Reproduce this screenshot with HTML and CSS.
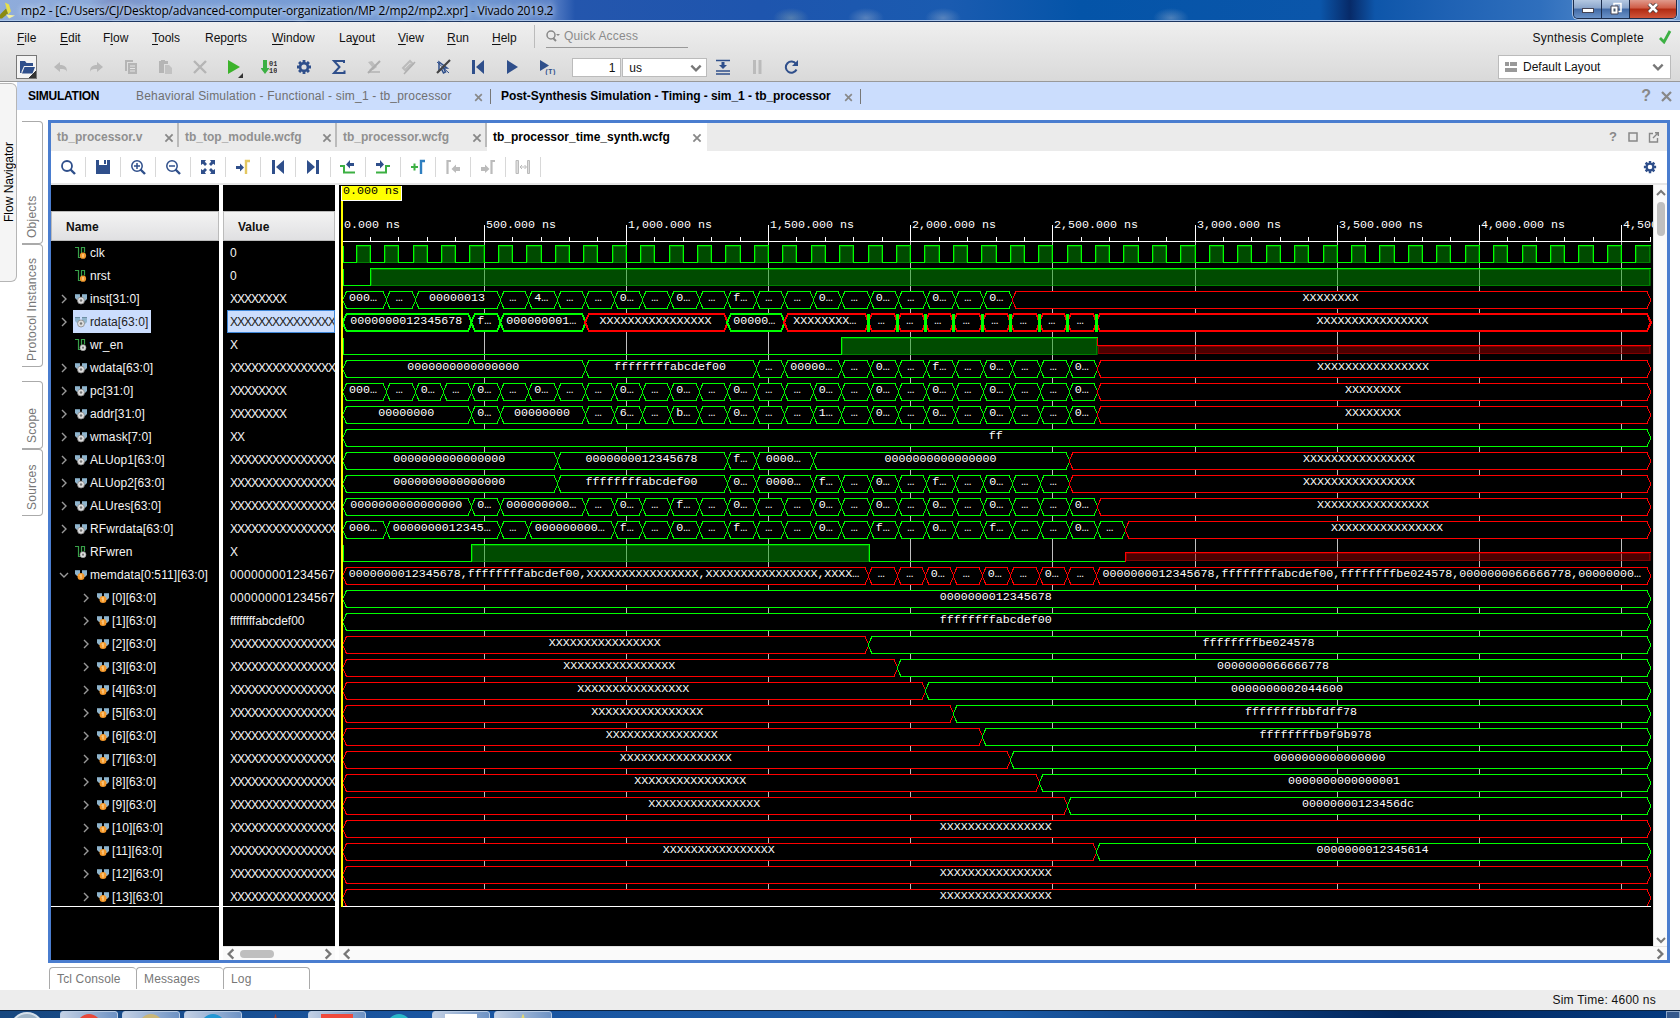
FILE: index.html
```html
<!DOCTYPE html>
<html lang="en">
<head>
<meta charset="utf-8">
<title>mp2 - Vivado 2019.2</title>
<link rel="stylesheet" href="styles.css">
</head>
<body>
<svg width="0" height="0" class="defs">
  <symbol id="gear" viewBox="0 0 16 16"><path d="M6.6 1h2.8v2l1 .4 1.5-1.3 2 2L12.600 5.600l.4 1h2v2.800h-2l-.4 1 1.300 1.500-2 2-1.500-1.300-1 .4v2H6.600v-2l-1-.4-1.500 1.300-2-2 1.300-1.500-.4-1H1V6.600h2l.4-1L2.100 4.100l2-2 1.500 1.300 1-.4zM8 5.400A2.600 2.600 0 1 0 8 10.600 2.600 2.600 0 1 0 8 5.400z" fill="#2f4f8b" fill-rule="evenodd"/></symbol>
  <symbol id="x" viewBox="0 0 10 10"><path d="M2 2l6 6M8 2l-6 6" stroke="#888" stroke-width="1.500"/></symbol>
  <symbol id="down" viewBox="0 0 12 12"><path d="M2 4l4 4 4-4" fill="none" stroke="#777" stroke-width="2"/></symbol>
  <symbol id="up" viewBox="0 0 12 12"><path d="M2 8l4-4 4 4" fill="none" stroke="#777" stroke-width="2"/></symbol>
  <symbol id="left" viewBox="0 0 12 12"><path d="M8 2L4 6l4 4" fill="none" stroke="#777" stroke-width="2"/></symbol>
  <symbol id="right" viewBox="0 0 12 12"><path d="M4 2l4 4-4 4" fill="none" stroke="#777" stroke-width="2"/></symbol>
  <symbol id="start" viewBox="0 0 16 16"><path d="M2 1h3v14H2zM14 1v14L6 8z" fill="#2f4f8b"/></symbol>
  <symbol id="bus" viewBox="0 0 12 12"><path d="M0 1h5v6H2L0 5zM7 1h5v5l-2 2H7z" fill="#8fb4cc"/><path d="M0 1h5v1H0zM7 1h5v1H7z" fill="#6d8ea3"/><circle cx="6" cy="7.500" r="3.500" fill="#ddd" stroke="#888" stroke-width=".8"/><circle cx="6" cy="7.500" r="1.200" fill="#777"/></symbol>
  <symbol id="mem" viewBox="0 0 12 12"><path d="M0 1h5v6H2L0 5zM7 1h5v5l-2 2H7z" fill="#8fb4cc"/><path d="M0 1h5v1H0zM7 1h5v1H7z" fill="#6d8ea3"/><circle cx="6" cy="7.500" r="3.500" fill="#f5982a"/><path d="M6 5.500v4M5 6.500l1-1" stroke="#ffe6b5" fill="none"/></symbol>
  <symbol id="clkbit" viewBox="0 0 12 12"><path d="M0 .5h3.500v10H6.500V.5H9.500v5" fill="none" stroke="#38a048" stroke-width="1.200"/><circle cx="8" cy="8.700" r="3.100" fill="#f5982a"/><path d="M8 7v3.400" stroke="#ffe6b5"/></symbol>
  <symbol id="netbit" viewBox="0 0 12 12"><path d="M0 .5h3.500v10H6.500V.5H9.500v5" fill="none" stroke="#38a048" stroke-width="1.200"/><circle cx="8" cy="8.700" r="3" fill="#ddd" stroke="#999" stroke-width=".6"/><circle cx="8" cy="8.700" r="1.100" fill="#777"/></symbol>
</svg>

<header class="titlebar">
  <svg class="logo" viewBox="0 0 16 16"><path d="M5 0l4 2 2 7-3 3z" fill="#e6e04a"/><path d="M0 12l6-6 2 5-6 5H0z" fill="#8a8a10"/><path d="M6 12l9 1-6 3z" fill="#f3f0a0"/></svg>
  <span class="title">mp2 - [C:/Users/CJ/Desktop/advanced-computer-organization/MP 2/mp2/mp2.xpr] - Vivado 2019.2</span>
  <i class="ghosts"></i>
  <div class="winbtns">
    <span class="wb min"><i></i></span>
    <span class="wb max"><svg width="12" height="13" viewBox="0 0 12 13"><path d="M4 1.500h7v8H4z" fill="none" stroke="#fff" stroke-width="1.500"/><path d="M1 4h7v8H1z" fill="#fff" stroke="#445"/><path d="M3.500 6.500h2v3h-2z" fill="#456" /></svg></span>
    <span class="wb close"><svg width="12" height="10" viewBox="0 0 12 10"><path d="M2 1l8 8M10 1L2 9" stroke="#433" stroke-width="4.200"/><path d="M2 1l8 8M10 1L2 9" stroke="#fff" stroke-width="2.600"/></svg></span>
  </div>
</header>

<section class="topbar">
  <div class="menurow">
    <nav class="menus">
      <span style="width:43px"><u>F</u>ile</span><span style="width:43px"><u>E</u>dit</span><span style="width:49px">F<u>l</u>ow</span><span style="width:53px"><u>T</u>ools</span><span style="width:67px">Rep<u>o</u>rts</span><span style="width:67px"><u>W</u>indow</span><span style="width:59px">La<u>y</u>out</span><span style="width:49px"><u>V</u>iew</span><span style="width:45px"><u>R</u>un</span><span style="width:42px"><u>H</u>elp</span>
    </nav>
    <div class="quick"><svg width="16" height="14" viewBox="0 0 16 14"><circle cx="6" cy="6" r="4" fill="none" stroke="#888" stroke-width="1.500"/><path d="M8 9l3 3" stroke="#888" stroke-width="2"/><path d="M11 5h4l-2 2z" fill="#888"/></svg>Quick Access</div>
    <span class="synth">Synthesis Complete</span>
    <svg class="check" width="14" height="14" viewBox="0 0 14 14"><path d="M2 8l4 4 6-11" fill="none" stroke="#3cb043" stroke-width="2.800"/></svg>
  </div>
  <div class="tools">
    <span class="t open"><svg width="16" height="16" viewBox="0 0 16 16"><path d="M1 2h5l1.500 2H14v3H5L2.500 12.500V14H1z" fill="#2f4f8b"/><path d="M5.500 8H16l-2.500 6.500H3z" fill="#2f4f8b"/></svg></span>
    <span class="t"><svg width="16" height="16" viewBox="0 0 16 16"><path d="M1 8l6-5v3c5 0 7 2 7 7-1-3-3-3-7-3v3z" fill="#b9b9b9"/></svg></span>
    <span class="t"><svg width="16" height="16" viewBox="0 0 16 16"><path d="M15 8L9 3v3c-5 0-7 2-7 7 1-3 3-3 7-3v3z" fill="#b9b9b9"/></svg></span>
    <span class="t"><svg width="16" height="16" viewBox="0 0 16 16"><path d="M2 1h8v2H4v9H2zM5 4h9v11H5z" fill="#b5b5b5"/><path d="M7 7h5M7 9.500h5M7 12h5" stroke="#e4e4e4"/></svg></span>
    <span class="t"><svg width="16" height="16" viewBox="0 0 16 16"><path d="M2 2h2V1h4v1h3v3H7v9H2z" fill="#b5b5b5"/><path d="M8 6h4l3 3v6H8z" fill="#c2c2c2"/></svg></span>
    <span class="t"><svg width="16" height="16" viewBox="0 0 16 16"><path d="M2 2l12 12M14 2L2 14" stroke="#b5b5b5" stroke-width="2.400"/></svg></span>
    <span class="t"><svg width="18" height="22" viewBox="0 0 18 22"><path d="M2 4l12 7-12 7z" fill="#3cb32b"/><path d="M17 17v5h-5z" fill="#333"/></svg></span>
    <span class="t"><svg width="16" height="16" viewBox="0 0 16 16"><path d="M2 1h4v8h2.500L4 15 -.5 9H2z" fill="#3cb043"/><text x="8" y="7" class="bits">01</text><text x="8" y="13.500" class="bits">10</text></svg></span>
    <span class="t"><svg width="16" height="16"><use href="#gear"/></svg></span>
    <span class="t"><svg width="16" height="16" viewBox="0 0 16 16"><path d="M13 4V2H3l5.500 6L3 14h10.500v-2.500" fill="none" stroke="#2f4f8b" stroke-width="2"/></svg></span>
    <span class="t"><svg width="16" height="16" viewBox="0 0 16 16"><path d="M2 3l4-1 5 6-4 3H3l3-3zM3 12h11v2H3z" fill="#bdbdbd"/><path d="M14 2L2 14" stroke="#adadad" stroke-width="2"/></svg></span>
    <span class="t"><svg width="16" height="16" viewBox="0 0 16 16"><path d="M3 9l7-7 3 3-7 7zM5 11l6-6" fill="none" stroke="#bbb" stroke-width="2"/><path d="M15 3L4 15" stroke="#b0b0b0" stroke-width="1.500"/></svg></span>
    <span class="t"><svg width="16" height="16" viewBox="0 0 16 16"><path d="M4 3v9l2.500-2 2 4 2-1-2-4H12z" fill="none" stroke="#2f4f8b" stroke-width="1.500"/><path d="M2 3l12 11" stroke="#2f4f8b" stroke-width="1"/><path d="M15 1L2 14" stroke="#444" stroke-width="2.200"/></svg></span>
    <span class="t"><svg width="16" height="16"><use href="#start"/></svg></span>
    <span class="t"><svg width="16" height="16" viewBox="0 0 16 16"><path d="M3 1l11 7-11 7z" fill="#2f4f8b"/></svg></span>
    <span class="t"><svg width="18" height="16" viewBox="0 0 18 16"><path d="M2 1l9 5.500L2 12z" fill="#2f4f8b"/><text x="6.500" y="14.500" class="tt">(T)</text></svg></span>
    <span class="num">1</span>
    <span class="unit">us<svg width="14" height="14"><use href="#down"/></svg></span>
    <span class="t step"><svg width="16" height="16" viewBox="0 0 16 16"><path d="M1 1.500h14M1 12h14M1 15h14" stroke="#2f4f8b" stroke-width="1.500"/><path d="M6.500 3h3v3H12l-4 4-4-4h2.500z" fill="#2f4f8b"/></svg></span>
    <span class="t"><svg width="16" height="16" viewBox="0 0 16 16"><path d="M4 1h3v14H4zM9.500 1h3v14h-3z" fill="#bbb"/></svg></span>
    <span class="t"><svg width="16" height="16" viewBox="0 0 16 16"><path d="M13 5a5.600 5.600 0 1 0 .5 5.500" fill="none" stroke="#2f4f8b" stroke-width="2"/><path d="M15 1v6H9z" fill="#2f4f8b"/></svg></span>
    <div class="layout"><svg width="12" height="12" viewBox="0 0 12 12"><path d="M0 1h4v4H0zM5 1h7v4H5zM0 7h12v4H0z" fill="#999"/></svg>Default Layout<svg class="push" width="14" height="14"><use href="#down"/></svg></div>
  </div>
</section>

<main class="work">
  <aside class="flow"><span>Flow Navigator</span></aside>
  <div class="content">
    <div class="simbar">
      <b class="s0">SIMULATION</b>
      <span class="s1">Behavioral Simulation - Functional - sim_1 - tb_processor</span>
      <svg class="cx" width="12" height="12"><use href="#x"/></svg>
      <b class="s2">Post-Synthesis Simulation - Timing - sim_1 - tb_processor</b>
      <svg class="cx" width="12" height="12"><use href="#x"/></svg>
      <span class="q push">?</span><svg width="15" height="15"><use href="#x"/></svg>
    </div>
    <div class="lower">
      <aside class="sidetabs">
        <div style="height:123px">Objects</div><div style="height:123px">Protocol Instances</div>
        <div class="gap" style="height:68px">Scope</div><div style="height:67px">Sources</div>
      </aside>
      <div class="center">
        <section class="panel">
          <div class="tabs">
            <span class="tab" style="width:128px">tb_processor.v<svg width="12" height="12"><use href="#x"/></svg></span>
            <span class="tab" style="width:158px">tb_top_module.wcfg<svg width="12" height="12"><use href="#x"/></svg></span>
            <span class="tab" style="width:150px">tb_processor.wcfg<svg width="12" height="12"><use href="#x"/></svg></span>
            <span class="tab active" style="width:220px">tb_processor_time_synth.wcfg<svg width="12" height="12"><use href="#x"/></svg></span>
            <span class="pq push">?</span>
            <svg class="pi" width="10" height="10" viewBox="0 0 10 10"><path d="M1 1h8v8H1z" fill="none" stroke="#888" stroke-width="1.500"/></svg>
            <svg class="pi" width="11" height="11" viewBox="0 0 11 11"><path d="M5 1.500H1.500V10H9.500V6M5 6l5-5M7 .8h3.300V4" fill="none" stroke="#888" stroke-width="1.400"/></svg>
          </div>
          <div class="wtools">
            <span><svg viewBox="0 0 16 16"><circle cx="7" cy="7" r="5" fill="none" stroke="#2f4f8b" stroke-width="1.800"/><path d="M10.500 10.500L15 15" stroke="#2f4f8b" stroke-width="2.400"/></svg></span>
            <span><svg viewBox="0 0 16 16"><path d="M1 1h3v5h8V1h3v14H1zM9 1h2v4H9z" fill="#2f4f8b"/></svg></span>
            <span><svg viewBox="0 0 16 16"><circle cx="7" cy="7" r="5.200" fill="none" stroke="#2f4f8b" stroke-width="1.500"/><path d="M10.500 10.500L15 15" stroke="#2f4f8b" stroke-width="2.400"/><path d="M4 7h6M7 4v6" stroke="#2f4f8b" stroke-width="1.500"/></svg></span>
            <span><svg viewBox="0 0 16 16"><circle cx="7" cy="7" r="5.200" fill="none" stroke="#2f4f8b" stroke-width="1.500"/><path d="M10.500 10.500L15 15" stroke="#2f4f8b" stroke-width="2.400"/><path d="M4 7h6" stroke="#2f4f8b" stroke-width="1.500"/></svg></span>
            <span><svg viewBox="0 0 16 16"><path d="M1 1h5L4.800 2.800 7 5 5 7 2.800 4.800 1 6zM15 1v5l-1.800-1.200L11 7 9 5l2.200-2.200L10 1zM1 15v-5l1.800 1.200L5 9l2 2-2.200 2.200L6 15zM15 15h-5l1.200-1.800L9 11l2-2 2.200 2.200L15 10z" fill="#2f4f8b"/></svg></span>
            <span><svg viewBox="0 0 16 16"><path d="M1 7h4V4.500L9 8.500l-4 4V10H1z" fill="#2f4f8b"/><path d="M15 2h-4v13" fill="none" stroke="#e3c760" stroke-width="2.400"/></svg></span>
            <span><svg><use href="#start"/></svg></span>
            <span><svg viewBox="0 0 16 16"><path d="M11 1h3v14h-3zM2 1l8 7-8 7z" fill="#2f4f8b"/></svg></span>
            <span><svg viewBox="0 0 16 16"><path d="M0 7h4v6.500h11" fill="none" stroke="#3cb043" stroke-width="2"/><path d="M14 4H10V1L6 5.500l4 4V7h4z" fill="#2f4f8b"/></svg></span>
            <span><svg viewBox="0 0 16 16"><path d="M15 7h-4v6.500H1" fill="none" stroke="#3cb043" stroke-width="2"/><path d="M1 4h4V1l4 4.500-4 4V7H1z" fill="#2f4f8b"/></svg></span>
            <span><svg viewBox="0 0 16 16"><path d="M1 8h7M4.500 4.500v7" stroke="#3cb043" stroke-width="2"/><path d="M15 2h-4v13" fill="none" stroke="#2f7fc0" stroke-width="2.400"/></svg></span>
            <span><svg viewBox="0 0 16 16"><path d="M6 2H2.500v13" fill="none" stroke="#bbb" stroke-width="2.200"/><path d="M15 8h-4V5.500L6.500 10l4.500 4V12h4z" fill="#bbb"/></svg></span>
            <span><svg viewBox="0 0 16 16"><path d="M15 2h-3.500v13" fill="none" stroke="#bbb" stroke-width="2.200"/><path d="M1 8h4V5.500L9.500 10 5 14V12H1z" fill="#bbb"/></svg></span>
            <span><svg viewBox="0 0 16 16"><path d="M1 1.500h2.500v13H1zM12.500 1.500h2v13h-2z" fill="#ddd" stroke="#bbb"/><path d="M5 8h6M7 6L5 8l2 2M9.500 6l2 2-2 2" fill="none" stroke="#bbb"/></svg></span>
            <svg class="push wg" width="14" height="14"><use href="#gear"/></svg>
          </div>
          <div class="viewer">
            <div class="names">
              <div class="blank"></div>
              <div class="head">Name</div>
              <div class="rows" id="names"></div>
            </div>
            <div class="values">
              <div class="blank"></div>
              <div class="head">Value</div>
              <div class="rows" id="values"></div>
              <div class="hs"><svg width="14" height="14"><use href="#left"/></svg><i></i><svg class="push" width="14" height="14"><use href="#right"/></svg></div>
            </div>
            <div class="wavecol">
              <div class="waverow">
                <svg id="wave" width="1314" height="761" viewBox="339 185 1314 761"></svg>
                <div class="vs"><svg width="12" height="12"><use href="#up"/></svg><i></i><svg class="bot" width="12" height="12"><use href="#down"/></svg></div>
              </div>
              <div class="hs wide"><svg width="14" height="14"><use href="#left"/></svg><svg class="push" width="14" height="14"><use href="#right"/></svg></div>
            </div>
          </div>
        </section>
        <div class="btabs"><span>Tcl Console</span><span>Messages</span><span>Log</span></div>
      </div>
    </div>
  </div>
</main>
<footer class="status">Sim Time: 4600 ns</footer>
<div class="taskbar">
  <i class="orb"></i>
  <span class="tk" style="background-color:#9db4d3"><b style="background:#e8493a"></b></span>
  <span class="tk"><b style="background:#c9b677"></b></span>
  <span class="tk"><b style="background:#2196d3"></b></span>
  <span class="tk off"><b style="background:#a04038;width:3px"></b></span>
  <span class="tk"><b class="sq" style="background:#ef4a3c"></b></span>
  <span class="tk off"><b style="background:#2bb8c8"></b></span>
  <span class="tk"><b class="sq" style="background:#fff"></b></span>
  <span class="tk"><b style="background:#e0d870;width:4px"></b></span>
  <i class="desk"></i>
</div>
<script src="wave.js"></script>
</body>
</html>
```
FILE: styles.css
```css
* { box-sizing: border-box; }
body { margin: 0; width: 1680px; height: 1018px; overflow: hidden; background: #fff; font: 12px/14px "Liberation Sans", Arial, sans-serif; color: #111; display: flex; flex-direction: column; }
svg { display: block; flex: none; }
.defs { position: absolute; }
.push { margin-left: auto; }

.titlebar { height: 22px; flex: none; display: flex; align-items: flex-start; border-bottom: 1px solid #1d3560; box-shadow: inset 0 -1px #a9c4e8; background: linear-gradient(90deg, #8facdb 0, #8ba9d9 90px, #7d93c8 110px, #7c9fd6 180px, #7198d2 480px, #5d83c8 550px, #2456ad 575px, #1e55ae 760px, #1a5bb0 950px, #0454a8 1080px, #0b56aa 1320px, #072a68 1350px, #0e56aa 1375px, #1f62b4 1450px, #2f6fbd 1540px, #6f9ed6 1680px); }
.logo { width: 16px; height: 17px; margin-top: 2px; }
.title { margin: 3px 0 0 5px; width: 534px; white-space: nowrap; font: 12px/16px "Open Sans", "Noto Sans", sans-serif; color: #000; text-shadow: 0 0 6px #d5e2f5, 0 0 6px #d5e2f5; letter-spacing: -.175px; }
.ghosts { width: 660px; height: 20px; margin-left: 216px; background: radial-gradient(ellipse 18px 10px at 20px 18px, #8fa9b077, transparent), radial-gradient(ellipse 18px 10px at 95px 18px, #9bb0cc77, transparent), radial-gradient(ellipse 18px 10px at 172px 18px, #9bb0cc77, transparent), radial-gradient(ellipse 18px 10px at 400px 18px, #9bb0cc77, transparent); }
.winbtns { margin-left: auto; margin-right: 3px; height: 19px; display: flex; border: 1px solid #1b2c4b; border-top: 0; border-radius: 0 0 5px 5px; overflow: hidden; box-shadow: 0 0 0 1px #a9c0e0; }
.wb { width: 28px; display: flex; align-items: center; justify-content: center; background: linear-gradient(#b4c8e2, #8aa5cb 45%, #426aa5 50%, #6a92c8); border-right: 1px solid #1b2c4b; padding-bottom: 2px; }
.min i { width: 12px; height: 5px; background: #fff; border: 1px solid #445; margin-top: 5px; }
.close { width: 46px; border: 0; background: linear-gradient(#e09a8c, #cf5b45 45%, #b12a12 50%, #d0553a); }

.topbar { height: 60px; flex: none; background: linear-gradient(#efefef, #d9d9d9); border-bottom: 1px solid #999; }
.menurow { height: 31px; display: flex; padding-left: 17px; }
.menus { display: flex; padding-top: 9px; }
.menus u { text-underline-offset: 2px; }
.quick { margin: 3px 0 0 0; height: 23px; width: 154px; padding: 4px 0 0 10px; display: flex; gap: 3px; color: #8b8b8b; letter-spacing: .18px; border-left: 1px solid #bbb; background: linear-gradient(#999, #999) 11px 22px / 142px 1px no-repeat; }
.synth { margin: 9px 0 0 auto; letter-spacing: .27px; }
.check { margin: 8px 8px 0 14px; }
.tools { height: 28px; display: flex; align-items: center; padding: 0 9px; }
.t { width: 34.7px; height: 22px; display: flex; align-items: center; justify-content: center; flex: none; }
.open { border: 1px solid #777; width: 21px; height: 24px; margin: 0 7px 0 7px; background: linear-gradient(315deg, #333 5px, #f4f4f4 5px); }
.bits { font: bold 7px "Liberation Mono", monospace; fill: #333; }
.tt { font: bold 7px "Liberation Mono", monospace; fill: #2f4f8b; letter-spacing: -.5px; }
.num { width: 49px; height: 19px; border: 1px solid #bbb; background: #fff; text-align: right; padding: 2px 5px; margin-left: 8px; }
.unit { width: 85px; height: 19px; border: 1px solid #bbb; background: #fff; display: flex; justify-content: space-between; padding: 2px 3px 0 6px; margin: 0 -1px 0 1px; }
.step { width: 33px; }
.layout { margin-left: auto; width: 173px; height: 24px; border: 1px solid #bbb; background: #fff; display: flex; align-items: center; padding: 0 5px 0 6px; gap: 6px; }

.work { height: 908px; flex: none; display: flex; }
.flow { width: 17px; height: 199px; margin-top: 1px; border: 1px solid #b5b5b5; border-left: 0; border-radius: 0 6px 6px 0; background: #f5f5f5; display: flex; align-items: center; justify-content: center; color: #000; }
.flow span { writing-mode: vertical-rl; transform: rotate(180deg); white-space: nowrap; margin-left: 2px; }
.content { width: 1663px; display: flex; flex-direction: column; }
.simbar { height: 28px; background: #cbddfd; display: flex; align-items: center; padding: 0 6px 0 11px; color: #000; margin-bottom: 10px; white-space: nowrap; }
.s0 { width: 108px; letter-spacing: -.25px; }
.s1 { width: 337px; color: #707070; letter-spacing: .19px; }
.s2 { width: 342px; margin-left: 10px; letter-spacing: -.05px; }
.cx { width: 18px; padding-right: 6px; border-right: 1px solid #777; height: 15px; padding-top: 2px; }
.q { font: bold 16px "Liberation Sans", Arial, sans-serif; color: #888; margin-right: 8px; }
.lower { display: flex; height: 870px; }
.sidetabs { width: 31px; padding: 1px 5px 0; color: #777; }
.sidetabs div { width: 21px; border: 1px solid #aaa; border-right: 0; border-radius: 4px 0 0 4px; writing-mode: vertical-rl; transform: rotate(180deg); padding-top: 5px; line-height: 21px; letter-spacing: .25px; }
.sidetabs .gap { margin-top: 14px; }
.center { width: 1622px; }
.panel { height: 843px; border: 3px solid #4a7dcf; }
.tabs { height: 28px; background: #ebebeb; display: flex; font-weight: bold; color: #909090; }
.tab { height: 24px; display: flex; align-items: center; justify-content: space-between; padding: 4px 2px 0 6px; border-right: 2px solid #bbb; white-space: nowrap; }
.tab svg { margin-top: 2px; }
.active { background: #fff; color: #000; height: 28px; padding-bottom: 4px; border: 0; padding-right: 4px; }
.pq { font: bold 13px/14px "Liberation Sans", Arial, sans-serif; margin-top: 7px; color: #888; }
.pi { margin: 9px 0 0 11px; }
.pi + .pi { margin: 9px 8px 0 10px; }
.wtools { height: 34px; display: flex; align-items: center; border-bottom: 2px solid #e6e6e6; }
.wtools span { width: 35px; height: 20px; border-right: 1px solid #d8d8d8; display: flex; align-items: center; justify-content: center; }
.wtools span svg { width: 16px; height: 16px; }
.wg { margin-right: 10px; }
.viewer { display: flex; height: 775px; background: #fff; }
.names { width: 168px; background: #000; margin-right: 4px; }
.values { width: 112px; background: #000; margin-right: 4px; overflow: hidden; }
.blank { height: 26px; background: #000; }
.head { height: 30px; background: linear-gradient(#f3f3f3, #e0e0e2); border: 1px solid #bbb; font-weight: bold; padding: 8px 14px; color: #111; }
.rows { color: #f4f4f4; height: 666px; border-bottom: 1px solid #fff; overflow: hidden; }
.values .rows { margin-bottom: 39px; }
.row { height: 23px; display: flex; align-items: center; white-space: nowrap; }
.names .row { padding-left: 7px; letter-spacing: .1px; }
.names .kid { padding-left: 29px; }
.arr { width: 12px; height: 12px; margin-right: 3px; }
.label { display: flex; align-items: center; gap: 3px; height: 23px; padding: 0 3px 0 2px; }
.sel .label { background: #cbddfd; color: #222; }
.values .row { padding-left: 7px; }
.values .xs { letter-spacing: -1px; }
.values .digits { letter-spacing: .33px; }
.values .sel { background: #cbddfd; color: #222; border: 1px solid #3e86d8; margin-left: 4px; padding-left: 2px; overflow: hidden; }
.hs { height: 14px; background: #fafafa; border-top: 1px solid #e3e3e3; display: flex; align-items: center; padding: 0 0 0 1px; }
.hs i { width: 34px; height: 8px; border-radius: 4px; background: #bfbfbf; margin-left: 2px; }
.waverow { display: flex; height: 761px; }
#wave { background: #000; }
.vs { width: 14px; background: #fafafa; border-left: 1px solid #e3e3e3; display: flex; flex-direction: column; align-items: center; padding-top: 2px; }
.vs i { width: 8px; height: 34px; border-radius: 4px; background: #bfbfbf; margin-top: 3px; }
.bot { margin-top: auto; }
.wide { width: 1328px; }
.wt { font-family: "Liberation Mono", "Courier New", monospace; font-size: 11.665px; fill: #fff; }
.btabs { display: flex; padding: 4px 0 0 1px; color: #777; }
.btabs span { width: 87px; height: 22px; border: 1px solid #aaa; border-bottom: 0; border-right: 0; border-radius: 4px 4px 0 0; padding: 4px 7px; letter-spacing: .15px; }
.btabs span:last-child { border-right: 1px solid #aaa; }
.status { height: 20px; flex: none; background: #ededed; text-align: right; padding: 3px 24px 0 0; color: #111; letter-spacing: .25px; }
.taskbar { height: 8px; flex: none; background: linear-gradient(90deg, #17477f, #1a55a0 400px, #1b5aa5 1000px, #02275d 1400px, #043a80); border-top: 1px solid #0c2340; display: flex; gap: 4px; padding-left: 10px; overflow: hidden; }
.orb { width: 34px; height: 34px; border-radius: 50%; background: #9fb4c6; border: 2px solid #d5e0ea; margin: 1px 12px 0 0; }
.tk { width: 58px; height: 12px; border: 1px solid #b8cbe4; border-radius: 3px; background: linear-gradient(90deg, #c3d0e4, #6d92c4); display: flex; justify-content: center; padding-top: 2px; }
.tk b { width: 24px; height: 24px; border-radius: 50%; flex: none; }
.tk .sq { width: 32px; border-radius: 0; }
.off { background: none; border-color: transparent; }
.desk { margin-left: auto; width: 14px; height: 10px; border: 1px solid #8fa8c8; background: #35598c; }
```
FILE: wave.js
```js
const X16 = 'X'.repeat(16), Z16 = '0'.repeat(16), X8 = 'X'.repeat(8);
const XOFF = 342, SCALE = 0.28435, TOP = 241, ROW = 23, END = 4600;
const px = t => XOFF + t * SCALE;

// Bus cells are [text, index of the clock period where the cell ends]; a leading "!" marks an unknown value.
// A run of single-period cells is a string in which "." stands for an elided value.
function run(from, chars) {
  return [...chars].map((c, i) => [c === '.' ? '…' : c + '…', from + i + 1]);
}
const A = 'ffffffffabcdef00', B = '0000000012345678';
const signals = [
  { n: 'clk', v: '0', icon: 'clkbit', clk: true },
  { n: 'nrst', v: '0', icon: 'clkbit', bit: [[0, 0], [100, 1]] },
  { n: 'inst[31:0]', v: X8, cells: [['000…', 1], ['…', 2], ['00000013', 5], ...run(5, '.4..0.0.f'), ...run(14, '..0.0.0.0'), ['!' + X8, 99]] },
  { n: 'rdata[63:0]', v: X16, sel: true, cells: [[B, 4], ['f…', 5], ['000000001…', 8], ['!' + X16, 13], ['00000…', 15], ['!XXXXXXXX…', 18], ...run(18, '........').map(c => ['!…', c[1]]), ['!' + X16, 99]] },
  { n: 'wr_en', v: 'X', icon: 'netbit', bit: [[0, 0], [1757, 1], [2657, 'x']] },
  { n: 'wdata[63:0]', v: X16, cells: [[Z16, 8], [A, 14], ['…', 15], ['00000…', 17], ...run(17, '.0.f.0..0'), ['!' + X16, 99]] },
  { n: 'pc[31:0]', v: X8, cells: [['000…', 1], ...run(1, '.0.0.0..0.0.0..0.0.0.0..0'), ['!' + X8, 99]] },
  { n: 'addr[31:0]', v: X8, cells: [['00000000', 4], ['0…', 5], ['00000000', 8], ...run(8, '.6.b.0..1.0.0.0..0'), ['!' + X8, 99]] },
  { n: 'wmask[7:0]', v: 'XX', cells: [['ff', 99]] },
  { n: 'ALUop1[63:0]', v: X16, cells: [[Z16, 7], [B, 13], ['f…', 14], ['0000…', 16], [Z16, 25], ['!' + X16, 99]] },
  { n: 'ALUop2[63:0]', v: X16, cells: [[Z16, 7], [A, 13], ['0…', 14], ['0000…', 16], ...run(16, 'f.0.f.0..'), ['!' + X16, 99]] },
  { n: 'ALUres[63:0]', v: X16, cells: [[Z16, 4], ['0…', 5], ['000000000…', 8], ...run(8, '.0.f.0..0.0.0.0..0'), ['!' + X16, 99]] },
  { n: 'RFwrdata[63:0]', v: X16, cells: [['000…', 1], ['0000000012345…', 5], ['…', 6], ['000000000…', 9], ...run(9, 'f.0.f..0.f.0.f..0.'), ['!' + X16, 99]] },
  { n: 'RFwren', v: 'X', icon: 'netbit', bit: [[0, 0], [457, 1], [1854, 0], [2757, 'x']] },
  { n: 'memdata[0:511][63:0]', v: B, icon: 'mem', open: true, allRed: true,
    cells: [[`${B},${A},${X16},${X16},XXXX…`, 18], ...run(18, '..0.0.0.'), [`${B},${A},ffffffffbe024578,0000000066666778,00000000…`, 99]] }
];
[B, A].forEach((v, i) => signals.push({ n: `[${i}][63:0]`, v, icon: 'mem', kid: true, cells: [[v, 99]] }));
const written = { 2: ['ffffffffbe024578', 18], 3: ['0000000066666778', 19], 4: ['0000000002044600', 20], 5: ['ffffffffbbfdff78', 21],
  6: ['ffffffffb9f9b978', 22], 7: [Z16, 23], 8: ['0000000000000001', 24], 9: ['00000000123456dc', 25], 11: ['0000000012345614', 26] };
for (let i = 2; i <= 13; i++) {
  const w = written[i];
  signals.push({ n: `[${i}][63:0]`, v: X16, icon: 'mem', kid: true, cells: w ? [['!' + X16, w[1]], [w[0], 99]] : [['!' + X16, 99]] });
}

document.getElementById('names').innerHTML = signals.map(s => {
  const arrow = s.cells ? `<svg class="arr" viewBox="0 0 12 12"><path d="${s.open ? 'M2 4l4 4 4-4' : 'M4 2l4 4-4 4'}" fill="none" stroke="#999" stroke-width="1.400"/></svg>` : '<span class="arr"></span>';
  return `<div class="row${s.kid ? ' kid' : ''}${s.sel ? ' sel' : ''}">${arrow}<span class="label"><svg width="12" height="12"><use href="#${s.icon || 'bus'}"/></svg>${s.n}</span></div>`;
}).join('');
document.getElementById('values').innerHTML = signals.map(s => {
  const kind = s.v[0] === 'X' ? ' xs' : s.v === B ? ' digits' : '';
  return `<div class="row${kind}${s.sel ? ' sel' : ''}">${s.v}</div>`;
}).join('');

const G = '#00ff00', R = '#ff0000';
let fills = '', grid = '', lines = '', texts = '';
const line = (d, c, w = 1) => { lines += `<path d="${d}" fill="none" stroke="${c}" stroke-width="${w}"/>`; };
const right = 1650.5;

for (let t = 100; t <= END; t += 100) {
  const x = Math.floor(px(t)) + .5;
  if (t % 500 === 0) {
    grid += `<path d="M${x} 242V906" stroke="#c0c0c0"/>`;
    line(`M${x} 225V241`, '#fff');
  } else line(`M${x} 237V241`, '#fff');
}
for (let t = 0; t < END; t += 500) {
  const s = (t >= 1000 ? Math.floor(t / 1000) + ',' + String(t % 1000).padStart(3, '0') : t) + '.000 ns';
  texts += `<text class="wt" x="${t ? Math.floor(px(t)) + 2 : 344}" y="228">${s}</text>`;
}

function drawBits(bits, y) {
  const hi = y + 4.5, lo = y + 21.5, mid = y + 12.5;
  let d = `M343.5 ${hi}V${lo}`, c = G;
  bits.forEach(([t, v], i) => {
    const x1 = i ? Math.floor(px(t)) + .5 : 343.5;
    const x2 = i + 1 < bits.length ? Math.floor(px(bits[i + 1][0])) + .5 : right;
    if (v === 'x') { line(d, c); d = `M${x1} ${bits[i - 1][1] ? hi : lo}`; c = R; }
    d += `L${x1} ${v === 1 ? hi : v === 0 ? lo : mid}H${x2}`;
    if (v) {
      const top = v === 1 ? hi : mid, w = x2 - x1, h = v === 1 ? 17 : 8, col = v === 1 ? '0,160,0' : '160,0,0';
      fills += `<rect x="${x1}" y="${top}" width="${w}" height="${h}" fill="rgba(${col},.47)"/>`;
      fills += `<rect x="${x1 + 1}" y="${top + 1}" width="${Math.max(w - 2, 1)}" height="${h - 1}" fill="none" stroke="rgba(${col},.6)"/>`;
    }
  });
  line(d, c);
}

signals.forEach((s, i) => {
  const y = TOP + ROW * i;
  if (s.clk) {
    const b = [[0, 0]];
    for (let t = 50; t < END; t += 50) b.push([t, (t / 50) % 2]);
    drawBits(b, y);
  } else if (s.bit) drawBits(s.bit, y);
  else {
    const w = s.sel ? 2 : 1, o = s.sel ? 0 : .5;
    const hi = y + 4 + o, lo = y + 21 + o, mid = y + 12.5 + o;
    const memory = s.icon === 'mem';
    let x1 = 343, marks = '';
    s.cells.forEach(([raw, k]) => {
      const red = raw[0] === '!' || s.allRed, label = raw.replace('!', '');
      const lag = memory || (s.sel && k >= 18) ? 52 : 57;
      const x2 = k === 99 ? right : Math.floor(px(100 * k + lag)) + .5;
      const a = x1 - .5, b = x2 + .5;
      lines += `<path d="M${a} ${mid}L${a + 4} ${hi}H${b - 4}L${b} ${mid}L${b - 4} ${lo}H${a + 4}Z" fill="#000" stroke="${red ? R : G}" stroke-width="${w}"/>`;
      if (s.sel && k >= 18 && k <= 26) marks += `<rect x="${x2 - 1.5}" y="${y + 4}" width="3" height="18" fill="${G}"/>`;
      const cx = (x1 + x2) / 2 - (label.endsWith('…') ? 1.7 : 1);
      texts += `<text class="wt" text-anchor="middle" x="${cx}" y="${y + 14}">${label}</text>`;
      x1 = x2;
    });
    lines += marks;
  }
});
line('M341 241.500H1651', '#fff');

document.getElementById('wave').innerHTML =
  `<g shape-rendering="crispEdges">${grid}${fills}${lines}<path d="M339 907h1314v39H339z"/><path d="M341 906.500H1651" stroke="#fff"/>
   <path d="M342 200V907" stroke="#ff0" stroke-width="2"/>
   <path d="M341 186H402V200.500H341z" fill="#fff"/><path d="M342 186H401V199.500H342z" fill="#ff0"/></g>
   ${texts}<text class="wt" x="343" y="194" style="fill:#000">0.000 ns</text>`;
```
